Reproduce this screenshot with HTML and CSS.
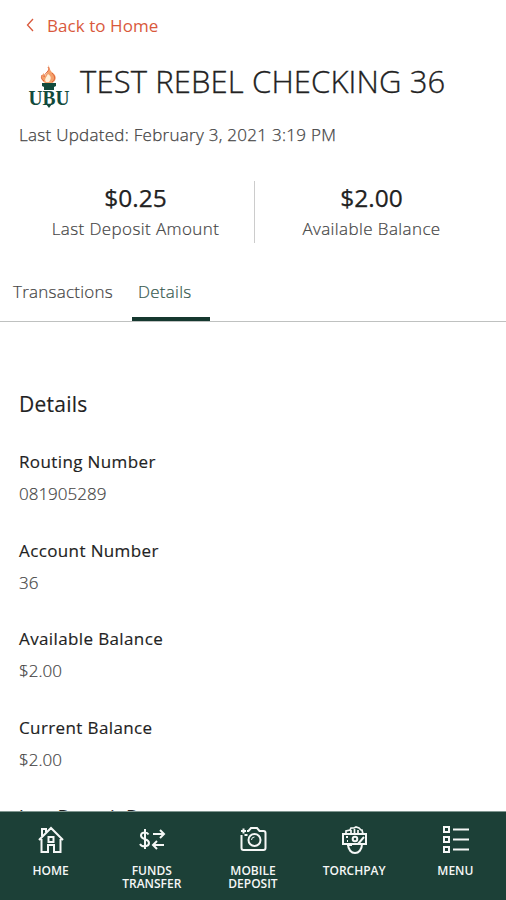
FILE: index.html
```
<!DOCTYPE html>
<html lang="en">
<head>
<meta charset="utf-8">
<meta name="viewport" content="width=device-width, initial-scale=1">
<title>Account Details</title>
<link rel="stylesheet" href="styles.css">
</head>
<body>
<div class="screen">
  <header class="header">
    <a class="back"><svg class="chevron" width="8" height="14" viewBox="0 0 8 14"><path d="M7 1 1.500 7 7 13"/></svg><span>Back to Home</span></a>
    <div class="account">
      <svg class="logo" width="44" height="48" viewBox="0 0 44 48">
        <path fill="#f4a06a" d="M21 1c3 4 1 5 5 8 5 4 2 9-1 10h-7c-5-3-4-8-1-10 0 2 0 2 1 3 2-4 5-5 3-11z"/>
        <path fill="#fff0d8" d="M21 10c4 3 3 5 1 8h-3c-2-3 0-4 2-8z"/>
        <path fill="none" stroke="#df6237" stroke-width="1" d="M21 3c3 4-4 6-4 10M25 9c4 4 3 7 0 9M17 17c-3-2-3-4-2-6"/>
        <path fill="#124a3c" d="M15 19h14v3l-2 1v3H17v-3l-2-1zM19 40h6l-3 4z"/>
        <text x="22" y="41" text-anchor="middle" textLength="41" lengthAdjust="spacingAndGlyphs">UBU</text>
      </svg>
      <h1 class="title">TEST REBEL CHECKING 36</h1>
    </div>
    <p class="updated">Last Updated: February 3, 2021 3:19 PM</p>
  </header>
  <section class="summary">
    <div class="stat"><strong>$0.25</strong><span>Last Deposit Amount</span></div>
    <div class="stat"><strong>$2.00</strong><span>Available Balance</span></div>
  </section>
  <nav class="tabs">
    <a class="tab">Transactions</a>
    <a class="tab active">Details</a>
  </nav>
  <main class="details">
    <h2>Details</h2>
    <dl>
      <div class="row"><dt>Routing Number</dt><dd>081905289</dd></div>
      <div class="row"><dt>Account Number</dt><dd>36</dd></div>
      <div class="row"><dt>Available Balance</dt><dd>$2.00</dd></div>
      <div class="row"><dt>Current Balance</dt><dd>$2.00</dd></div>
      <div class="row"><dt>Last Deposit Date</dt></div>
    </dl>
  </main>
  <nav class="bottom">
    <a class="item"><svg viewBox="0 0 28 30"><path d="M2 15 14 3l12 12M4.500 14v13H11v-7h6v7h6.500V14M5 11V4h4v3M11.500 12h5v5h-5z"/></svg><span>HOME</span></a>
    <a class="item"><svg viewBox="0 0 28 30"><path d="M10.500 9.500C9 6.500 3 7 3 10.500c0 5 8 2.500 8 7.500 0 4-7 4.500-9 1M7 4v20M15 9h11m-4-4 4 4-4 4M26 20H15m4-4-4 4 4 4"/></svg><span>FUNDS TRANSFER</span></a>
    <a class="item"><svg viewBox="0 0 28 30"><path d="M8 6h1.500L12 3h6l2.500 3h4q2 0 2 2v15q0 2-2 2h-20q-2 0-2-2V10M2 6h5M4.500 3.500v5M5.500 10h3"/><circle cx="15.500" cy="15" r="6"/><path d="M12.500 15q0-3 3-3" stroke-width="1"/></svg><span>MOBILE DEPOSIT</span></a>
    <a class="item"><svg viewBox="0 0 28 30"><path d="M6 9V6l4-1 1-2h3l2-1 3 1 2 2h1l1 4M11 5v3M14.500 4v4M18 5v3" stroke-width="1.700"/><path d="M3 9h23v10H3zM8 19c0 12 14 12 14 0M7 20h5M18 19l6-7"/><circle cx="15" cy="14" r="2.300"/><path d="M6 12h2M7 16h1"/></svg><span>TORCHPAY</span></a>
    <a class="item"><svg viewBox="0 0 28 30"><path d="M3 2h5v5H3zM3 12h5v5H3zM3 22h5v5H3zM12 4.500h16M12 14.500h16M12 24.500h16"/></svg><span>MENU</span></a>
  </nav>
</div>
</body>
</html>
```
FILE: styles.css
```
* { box-sizing: border-box; }
body { margin: 0; font-family: "Open Sans", sans-serif; background: #fff; color: #222; }
h1, h2, p, dl, dd { margin: 0; font-weight: 400; }
.screen { display: flex; flex-direction: column; height: 900px; overflow: hidden; }
.header { flex: none; height: 170px; padding: 13px 19px 0; }
.back { display: flex; align-items: center; gap: 13px; height: 24px; padding-left: 7px; color: #d9593c; font-size: 17px; letter-spacing: .06px; }
.chevron { fill: none; stroke: currentColor; stroke-width: 1.300; }
.account { display: flex; height: 85px; padding: 20px 0 0 8px; }
.logo { margin-top: 7px; flex: none; }
.logo text { font: 700 20px "Liberation Serif", serif; fill: #124a3c; }
.title { margin-left: 9px; font-size: 31px; font-weight: 300; line-height: 48px; letter-spacing: .13px; white-space: nowrap; -webkit-text-stroke: .35px currentColor; }
.updated { font-size: 17px; font-weight: 300; line-height: 26px; letter-spacing: .28px; white-space: nowrap; color: #444; -webkit-text-stroke: .25px currentColor; }
.summary { flex: none; display: grid; grid-template-columns: 254px 1fr; height: 72px; padding-top: 11px; }
.stat { display: flex; flex-direction: column; align-items: center; padding: 1px 0 0 17px; }
.stat + .stat { border-left: 1px solid #ccc; padding-left: 0; padding-right: 18px; }
.stat strong { font-size: 24.500px; font-weight: 400; line-height: 32px; -webkit-text-stroke: .25px currentColor; }
.stat span { font-size: 17px; font-weight: 300; line-height: 29px; letter-spacing: .4px; color: #444; -webkit-text-stroke: .2px currentColor; }
.tabs { flex: none; display: flex; height: 80px; padding: 32px 13px 0; border-bottom: 1px solid #bfc1c0; font-size: 17px; font-weight: 300; line-height: 36px; letter-spacing: .25px; -webkit-text-stroke: .2px currentColor; }
.tab { width: 100px; color: #444; }
.tab.active { width: 78px; margin-left: 19px; padding-left: 6px; border-bottom: 4px solid #15382f; color: #35584e; }
.details { flex: 1; min-height: 0; overflow: hidden; padding: 66px 19px 0; }
.details h2 { font-size: 21px; line-height: 32px; letter-spacing: .25px; -webkit-text-stroke: .15px currentColor; }
.details dl { padding-top: 30px; }
.row { height: 88.600px; }
dt { font-size: 17px; line-height: 24px; letter-spacing: .38px; -webkit-text-stroke: .15px currentColor; }
dd { padding-top: 8px; font-size: 17px; font-weight: 300; line-height: 24px; color: #444; -webkit-text-stroke: .2px currentColor; }
.bottom { flex: none; display: grid; grid-template-columns: repeat(5, 1fr); height: 89px; padding-top: 13px; border-top: 1px solid #809790; background: #1c4037; color: #f5f7f6; }
.item { display: flex; flex-direction: column; align-items: center; font-size: 12px; font-weight: 600; line-height: 13px; text-align: center; }
.item span { max-width: 64px; }
.item svg { width: 28px; height: 30px; margin-bottom: 9px; fill: none; stroke: currentColor; stroke-width: 2; }
```
